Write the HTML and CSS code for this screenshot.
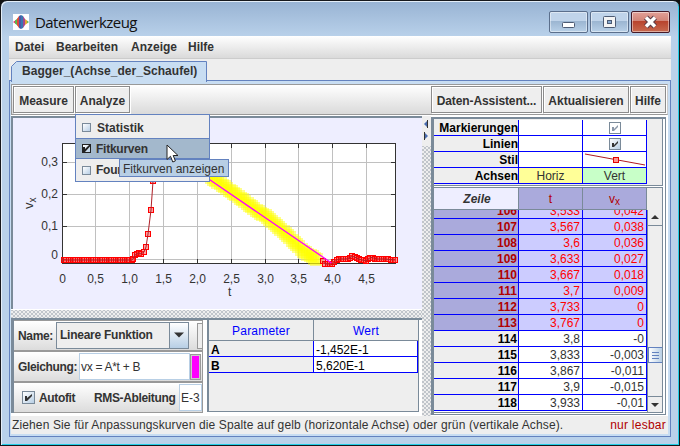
FILE: index.html
```
<!DOCTYPE html>
<html lang="de">
<head>
  <meta charset="UTF-8">
  <title>Datenwerkzeug</title>
  <link rel="stylesheet" href="styles.css">
</head>
<body>
  <div class="window">
    <div class="titlebar">
      <svg class="app-icon" width="16" height="16" viewBox="0 0 16 16">
        <rect width="16" height="16" fill="#fff"/>
        <path d="M0 8l3-2v4z" fill="#e8336d"/>
        <path d="M2 6.500l3-2.500v8L2 9.500z" fill="#5cb848"/>
        <path d="M4 5l2-3v12l-2-3z" fill="#e0483c"/>
        <path d="M6 2l2-1v14l-2-1z" fill="#4a58a8"/>
        <path d="M8 1l2 1v12l-2 1z" fill="#3a78b0"/>
        <path d="M10 2l2 3v6l-2 3z" fill="#a04890"/>
        <path d="M12 5l2 1.500v3L12 11z" fill="#e8a030"/>
        <path d="M14 6.500l2 1.500-2 1.500z" fill="#68c050"/>
      </svg>
      <span class="title">Datenwerkzeug</span>
      <div class="win-buttons">
        <div class="win-btn"><svg width="37" height="20"><rect x="12.500" y="10.500" width="12" height="5" rx="1" fill="#fff" stroke="#4d5b73"/></svg></div>
        <div class="win-btn"><svg width="37" height="20"><rect x="12.500" y="4.500" width="12" height="11" rx="1" fill="#f4f4f4" stroke="#4d5b73"/><rect x="16.500" y="8.500" width="4" height="3" fill="#86a8cf" stroke="#4d5b73"/></svg></div>
        <div class="win-btn close"><svg width="37" height="20"><path d="M14 5.500l9 9M23 5.500l-9 9" stroke="#5a3b45" stroke-width="5.500"/><path d="M14 5.500l9 9M23 5.500l-9 9" stroke="#fff" stroke-width="3.500"/></svg></div>
      </div>
    </div>

    <div class="client">
      <div class="menubar">
        <span class="m1">Datei</span><span class="m2">Bearbeiten</span><span class="m3">Anzeige</span><span>Hilfe</span>
      </div>
      <div class="tabs">
        <div class="tab">
          <svg width="196" height="22"><path d="M.5 22V6.500l5-5H195.500V22" fill="#c8ddf2" stroke="#6382bf"/></svg>
          <span>Bagger_(Achse_der_Schaufel)</span>
        </div>
      </div>

      <div class="panel">
        <div class="toolbar">
          <div class="tool measure">Measure</div>
          <div class="tool analyze">Analyze</div>
          <div class="space"></div>
          <div class="tool assistant">Daten-Assistent...</div>
          <div class="tool update">Aktualisieren</div>
          <div class="tool help">Hilfe</div>
        </div>

        <div class="main">
          <div class="left">
            <div class="plot">
              <svg id="chart" width="408" height="190" viewBox="13 118 408 190">
                <rect x="62.500" y="143.500" width="333" height="120" fill="#fff"/>
                <g id="grid"></g>
                <rect x="62.500" y="143.500" width="333" height="120" fill="none" stroke="#333"/>
                <g id="ticks" stroke="#333"></g>
                <g id="labels" class="labels"></g>
                <g id="points"></g>
                <text x="228" y="296" class="axis">t</text>
                <text transform="translate(33 209) rotate(-90)" class="axis axis-y">v<tspan dy="3" font-size="10">x</tspan></text>
              </svg>
            </div>
            <div class="hdivider"></div>
            <div class="bottom">
              <div class="controls">
                <div class="row">
                  <span class="lbl name">Name:</span>
                  <div class="combo"><span>Lineare Funktion</span><i><svg width="18" height="24"><path d="M4 9.500h10l-5 5z" fill="#333"/></svg></i></div>
                  <div class="stub"></div>
                </div>
                <div class="row">
                  <span class="lbl eq">Gleichung:</span>
                  <div class="field">vx = A*t + B</div>
                  <div class="swatch"></div>
                </div>
                <div class="row">
                  <span class="check auto"><svg width="13" height="13"><path d="M3 5h2v2l5-4v2L5 10H3z" fill="#333"/></svg></span>
                  <span class="lbl autofit">Autofit</span>
                  <span class="lbl rms">RMS-Ableitung</span>
                  <div class="field rmsval">E-3</div>
                </div>
              </div>
              <div class="params">
                <div class="phead"><span>Parameter</span><span>Wert</span></div>
                <div class="prow"><b>A</b><span>-1,452E-1</span></div>
                <div class="prow"><b>B</b><span>5,620E-1</span></div>
              </div>
            </div>
          </div>

          <div class="vdivider">
            <svg width="9" height="30"><path d="M6 4v8L2 8z" fill="#4a6cb0"/><path d="M2 16v8l4-4z" fill="#4a6cb0"/><path d="M2.500 16v8M5.500 4v8" stroke="#333"/></svg>
          </div>

          <div class="right">
            <div class="style-table">
              <div class="srow"><b>Markierungen</b><span></span><span><em class="check off"><svg width="12" height="12"><path d="M3 5h2v2l4-4v2L5 9H3z" fill="#8a97a8"/></svg></em></span></div>
              <div class="srow"><b>Linien</b><span></span><span><em class="check"><svg width="12" height="12"><path d="M3 5h2v2l4-4v2L5 9H3z" fill="#333"/></svg></em></span></div>
              <div class="srow"><b>Stil</b><span></span><span><svg width="63" height="15"><path d="M2 2l60 11" stroke="#b01820"/><rect x="30.500" y="5.500" width="5" height="5" fill="#ff9090" stroke="#e00000"/></svg></span></div>
              <div class="srow"><b>Achsen</b><span class="horiz">Horiz</span><span class="vert">Vert</span></div>
            </div>
            <div class="data-table">
              <div class="dhead"><b>Zeile</b><span>t</span><span>v<sub>x</sub></span><i></i></div>
              <div class="dbody">
                <div class="rows">
                  <div class="drow sel"><b>106</b><span>3,533</span><span>0,042</span></div>
                  <div class="drow sel"><b>107</b><span>3,567</span><span>0,038</span></div>
                  <div class="drow sel"><b>108</b><span>3,6</span><span>0,036</span></div>
                  <div class="drow sel"><b>109</b><span>3,633</span><span>0,027</span></div>
                  <div class="drow sel"><b>110</b><span>3,667</span><span>0,018</span></div>
                  <div class="drow sel"><b>111</b><span>3,7</span><span>0,009</span></div>
                  <div class="drow sel"><b>112</b><span>3,733</span><span>0</span></div>
                  <div class="drow sel"><b>113</b><span>3,767</span><span>0</span></div>
                  <div class="drow"><b>114</b><span>3,8</span><span>-0</span></div>
                  <div class="drow"><b>115</b><span>3,833</span><span>-0,003</span></div>
                  <div class="drow"><b>116</b><span>3,867</span><span>-0,011</span></div>
                  <div class="drow"><b>117</b><span>3,9</span><span>-0,015</span></div>
                  <div class="drow"><b>118</b><span>3,933</span><span>-0,01</span></div>
                </div>
                <div class="scrollbar">
                  <div class="arrow"><svg width="14" height="15"><path d="M3 9h8L7 5z" fill="#333"/></svg></div>
                  <div class="track"></div>
                  <div class="thumb"><i></i><i></i><i></i></div>
                  <div class="track2"></div>
                  <div class="arrow down"><svg width="14" height="15"><path d="M3 6h8l-4 4z" fill="#333"/></svg></div>
                </div>
              </div>
            </div>
          </div>
        </div>

        <div class="status">
          <span class="hint">Ziehen Sie für Anpassungskurven die Spalte auf gelb (horizontale Achse) oder grün (vertikale Achse).</span>
          <span class="readonly">nur lesbar</span>
        </div>
      </div>
    </div>
  </div>

  <div class="popup">
    <div class="item first"><em class="box"></em>Statistik</div>
    <div class="item active"><em class="box on"><svg width="9" height="9"><path d="M1 3h2v2l5-5v2.500L3 8H1z" fill="#222"/></svg></em>Fitkurven</div>
    <div class="item"><em class="box"></em>Four</div>
  </div>
  <div class="tooltip">Fitkurven anzeigen</div>
  <svg class="cursor" width="14" height="20" viewBox="0 0 14 20"><path d="M1 1v14.500l3.500-3.200 2.300 5.700 2.600-1.100L7.200 11.500H12z" fill="#fff" stroke="#222"/></svg>

  <script>
    const NS = 'http://www.w3.org/2000/svg';
    function add(parent, tag, attrs, text) {
      const el = document.createElementNS(NS, tag);
      for (const k in attrs) el.setAttribute(k, attrs[k]);
      if (text) el.textContent = text;
      document.getElementById(parent).appendChild(el);
    }

    // grid, ticks and axis labels
    const xs = [62, 95, 129, 163, 197, 231, 265, 298, 332, 366];
    const xl = ['0', '0,5', '1,0', '1,5', '2,0', '2,5', '3,0', '3,5', '4,0', '4,5'];
    xs.forEach((x, i) => {
      if (i) {
        add('grid', 'path', { d: `M${x + .5} 144V263`, stroke: '#c0c0c0' });
        add('ticks', 'path', { d: `M${x + .5} 144v4M${x + .5} 263v-4` });
      }
      add('labels', 'text', { x: x + .5, y: 283, 'text-anchor': 'middle' }, xl[i]);
    });
    [[162, '0,3'], [194, '0,2'], [226, '0,1'], [259, '0']].forEach(([y, t], i) => {
      add('grid', 'path', { d: `M63 ${y + .5}H395`, stroke: '#c0c0c0' });
      add('ticks', 'path', { d: `M63 ${y + .5}h4M395 ${y + .5}h-4` });
      add('labels', 'text', { x: 58, y: i === 3 ? 259 : y + 4, 'text-anchor': 'end' }, t);
    });

    function interpolate(pts, x) {
      for (let i = 1; i < pts.length; i++) {
        const [x0, y0] = pts[i - 1], [x1, y1] = pts[i];
        if (x <= x1) return y0 + (y1 - y0) * (x - x0) / (x1 - x0);
      }
      return pts[pts.length - 1][1];
    }
    function marks(pts) {
      pts.forEach(([x, y]) => add('points', 'rect', {
        x: Math.round(x) - 2.5, y: Math.round(y) - 2.5, width: 5, height: 5,
        fill: '#ff4040', 'fill-opacity': .5, stroke: '#f00'
      }));
      add('points', 'polyline', { points: pts.map(p => p.join()).join(' '), fill: 'none', stroke: '#b02028' });
    }

    const start = [];
    for (let x = 64; x < 132; x += 2.25) start.push([x, 260]);
    start.push([133, 259], [135, 255], [137, 254], [139, 253], [141, 254], [144, 252], [146, 247], [148, 234], [151, 210], [153, 181], [155, 160]);
    marks(start);

    // highlighted points
    const band = [[196, 166], [210, 177], [226, 188], [240, 198], [254, 209], [268, 218], [280, 229], [292, 240], [304, 252], [317, 260]];
    for (let x = 198; x < 318; x += 2.25) {
      add('points', 'rect', { x: Math.round(x) - 7, y: Math.round(interpolate(band, x)) - 7, width: 13, height: 13, fill: '#ff0', 'fill-opacity': .45 });
    }

    const tail = [[323, 261], [325, 264], [328, 264], [333, 264], [336, 260], [341, 259], [347, 259], [353, 256], [358, 259], [366, 261], [371, 257], [376, 259], [384, 259], [395, 260]];
    const end = [];
    for (let x = 323; x <= 395; x += 2.25) end.push([x, interpolate(tail, x)]);
    marks(end);
    add('points', 'path', { d: 'M205 176.500L331.500 263', stroke: '#f0f', 'stroke-width': 1.3 });
  </script>
</body>
</html>
```
FILE: styles.css
```
* {
  box-sizing: border-box;
}
body {
  margin: 0;
  width: 680px;
  height: 446px;
  overflow: hidden;
  background: #111;
  font: 12px "Liberation Sans", Arial, sans-serif;
  color: #333;
}
b, em, i {
  font-style: normal;
}
svg {
  display: block;
}
.window {
  width: 680px;
  height: 446px;
  border: 1px solid #16181c;
  border-radius: 7px 7px 0 0;
  background: linear-gradient(#98b3d3, #b9d1ea 36px);
  box-shadow: inset 1px 1px #e4eef8, inset -1px -1px #22cfe8;
}
.titlebar {
  display: flex;
  height: 35px;
  padding-left: 12px;
}
.app-icon {
  margin-top: 13px;
}
.title {
  margin: 9px 0 0 6px;
  font: 15px/24px "Open Sans", sans-serif;
  letter-spacing: -0.55px;
  color: #111;
}
.win-buttons {
  display: flex;
  gap: 2px;
  margin: 10px 9px 0 auto;
}
.win-btn {
  width: 39px;
  height: 22px;
  border: 1px solid #5b6f8c;
  border-radius: 2px;
  background: linear-gradient(#c0d4ea 45%, #9bb5d1 46%, #b8d0e8);
  box-shadow: inset 0 0 0 1px rgba(255, 255, 255, 0.45);
}
.win-btn.close {
  border-color: #451a28;
  background: linear-gradient(#e2a097, #d28477 45%, #b8432d 46%, #c86a50);
}
.client {
  width: 662px;
  margin-left: 8px;
  background: #eee;
}
.menubar {
  display: flex;
  height: 23px;
  padding-left: 6px;
  border-bottom: 1px solid #ccc;
  background: linear-gradient(#fff, #dadada);
  font-weight: bold;
  line-height: 22px;
}
.m1 {
  width: 41px;
}
.m2 {
  width: 75px;
}
.m3 {
  width: 57px;
}
.tabs {
  height: 21px;
  padding: 1px 0 0 2px;
}
.tab {
  display: grid;
  position: relative;
  z-index: 1;
  width: 196px;
}
.tab > * {
  grid-area: 1 / 1;
}
.tab span {
  padding-left: 11px;
  font-weight: bold;
  line-height: 22px;
  letter-spacing: 0.05px;
}
.panel {
  height: 357px;
  padding: 3px 2px 2px 1px;
  border: 1px solid #6382bf;
  background: #c8ddf2;
}
.toolbar {
  display: flex;
  gap: 1px;
  height: 31px;
  padding: 1px 1px 0;
  border: 1px solid #999;
  border-right-color: #ccc;
  background: linear-gradient(#fff, #dadada);
}
.tool {
  height: 27px;
  border: 1px solid #8c8c8c;
  box-shadow: inset 1px 1px #fff, 1px 1px #fff;
  background: #eee;
  font-weight: bold;
  line-height: 28px;
  text-align: center;
  white-space: nowrap;
}
.measure {
  width: 61px;
}
.analyze {
  width: 55px;
}
.space {
  flex: 1;
}
.assistant {
  width: 111px;
  letter-spacing: -0.1px;
}
.update {
  width: 86px;
}
.help {
  width: 36px;
}
.main {
  display: flex;
  height: 301px;
  padding-top: 1px;
  background: #fff;
}
.left {
  width: 411px;
}
.plot {
  height: 193px;
  border: solid #7a8a99;
  border-width: 2px 0 0 2px;
  background: #eef;
}
.labels, .axis {
  fill: #333;
  font: 12px "Liberation Sans", Arial, sans-serif;
}
.axis-y {
  font-size: 13px;
}
.hdivider {
  height: 9px;
  border-top: 1px solid #fff;
  background:
    radial-gradient(circle, #8a94a0 0.6px, transparent 0.8px) 3px 2px / 4px 4px,
    radial-gradient(circle, #8a94a0 0.6px, transparent 0.8px) 1px 0 / 4px 4px,
    #eee;
}
.bottom {
  display: flex;
  gap: 4px;
  height: 96px;
  border-top: 2px solid #7a8a99;
}
.controls {
  width: 192px;
  height: 93px;
  border-left: 3px solid #7a8a99;
  background: #eee;
}
.row {
  display: flex;
  align-items: center;
  height: 31px;
  border: solid #999;
  border-width: 1px 1px 1px 0;
  box-shadow: inset 0 1px #fff;
  background: linear-gradient(#fff, #dcdcdc);
}
.lbl {
  padding-top: 1px;
  font-weight: bold;
  letter-spacing: -0.35px;
  white-space: nowrap;
}
.name {
  width: 42px;
  padding-left: 4px;
}
.combo {
  display: flex;
  width: 133px;
  height: 27px;
  border: 1px solid #7a8a99;
  background: #eee;
  font-weight: bold;
  line-height: 25px;
}
.combo span {
  width: 112px;
  padding-left: 3px;
  letter-spacing: -0.25px;
}
.combo i {
  width: 19px;
  border-left: 1px solid #7a8a99;
  background: linear-gradient(#fff, #b8cfe5);
}
.stub {
  width: 5px;
  height: 26px;
  margin-left: auto;
  border: solid #999;
  border-width: 1px 0 1px 1px;
  background: #eee;
}
.eq {
  width: 65px;
  padding-left: 4px;
}
.field {
  width: 111px;
  height: 27px;
  padding-left: 1px;
  border: 1px solid #b8cfe5;
  background: #fff;
  line-height: 26px;
  letter-spacing: -0.3px;
  white-space: nowrap;
}
.swatch {
  width: 11px;
  height: 26px;
  border: 2px solid #ccc;
  outline: 1px solid #999;
  outline-offset: -1px;
  background: #f0f;
}
.check {
  display: block;
  width: 12px;
  height: 12px;
  border: 1px solid #7a8a99;
  background: linear-gradient(135deg, #fff, #b8cfe5);
}
.check svg {
  margin: -1px;
}
.check.off {
  background: #fff;
}
.auto {
  width: 13px;
  height: 13px;
  margin-left: 8px;
}
.autofit {
  width: 55px;
  margin-left: 4px;
}
.rms {
  width: 85px;
}
.rmsval {
  width: 23px;
  padding-left: 1px;
  letter-spacing: 0;
}
.params {
  width: 212px;
  height: 92px;
  border: solid #7a8a99;
  border-width: 0 1px 1px 2px;
  background: #eee;
}
.phead {
  display: flex;
  height: 21px;
  border-bottom: 1px solid #7a8a99;
  color: #00f;
  line-height: 22px;
  letter-spacing: 0.2px;
  text-align: center;
}
.phead span {
  width: 104px;
}
.phead span:first-child {
  width: 105px;
  border-right: 1px solid #7a8a99;
}
.prow {
  display: flex;
  height: 16px;
  color: #000;
  line-height: 18px;
}
.prow b {
  width: 105px;
  padding-left: 2px;
  border: solid #00f;
  border-width: 0 1px 1px 0;
}
.prow span {
  width: 104px;
  padding-left: 2px;
  border: solid #00f;
  border-width: 0 1px 1px 0;
  background: #fff;
}
.vdivider {
  width: 9px;
  background:
    radial-gradient(circle, #8a94a0 0.6px, transparent 0.8px) 3px 0 / 4px 4px,
    radial-gradient(circle, #8a94a0 0.6px, transparent 0.8px) 1px 2px / 4px 4px,
    #eee;
}
.vdivider svg {
  background: #eee;
}
.right {
  width: 235px;
  height: 298px;
  margin-top: 1px;
  padding-right: 2px;
  border: 1px solid #7a8a99;
  border-width: 2px 1px 1px 3px;
}
.style-table {
  height: 67px;
  padding-top: 1px;
  border: solid #7a8a99;
  border-width: 0 1px 1px 0;
  background: #eee;
}
.srow, .drow {
  display: flex;
  height: 16px;
  line-height: 16px;
}
.srow b {
  width: 85px;
  border: solid #00f;
  border-width: 0 1px 1px 0;
  color: #000;
  text-align: right;
}
.srow span {
  display: flex;
  justify-content: center;
  width: 64px;
  border: solid #00f;
  border-width: 0 1px 1px 0;
  background: #fff;
}
.srow .check {
  margin: 2px 0 0 1px;
}
.srow .horiz {
  background: #ffff98;
}
.srow .vert {
  background: #c8ffc8;
}
.data-table {
  height: 226px;
  margin-top: 1px;
  border: solid #7a8a99;
  border-width: 1px 1px 1px 0;
}
.dhead {
  display: flex;
  height: 22px;
  color: #b00000;
  line-height: 23px;
  text-align: center;
}
.dhead > * {
  width: 64px;
  border: solid #7a8a99;
  border-width: 0 1px 1px 0;
  background: #aaaadc;
}
.dhead b {
  width: 85px;
  padding-left: 2px;
  background: #eef;
  color: #333;
  font-style: italic;
}
.dhead i {
  flex: 1;
  border: 0;
  background: #eee;
}
.dhead sub {
  font-size: 10px;
  line-height: 0;
  vertical-align: -2px;
}
.dbody {
  display: flex;
  height: 202px;
  overflow: hidden;
}
.rows {
  width: 213px;
  margin-top: -7px;
}
.drow b {
  width: 85px;
  padding-right: 1px;
  border: solid #00f;
  border-width: 0 1px 1px 0;
  background: #eee;
  color: #000;
  text-align: right;
}
.drow span {
  width: 64px;
  padding-right: 2px;
  border: solid #00f;
  border-width: 0 1px 1px 0;
  background: #fff;
  text-align: right;
}
.drow.sel b {
  background: #aaaadc;
  color: #b00000;
}
.drow.sel span {
  background: #ccf;
  color: #f00;
}
.scrollbar {
  display: flex;
  flex-direction: column;
  width: 15px;
  height: 202px;
  border-left: 1px solid #7a8a99;
  background: #eee;
}
.arrow {
  height: 16px;
  border-bottom: 1px solid #7a8a99;
}
.track {
  height: 121px;
}
.thumb {
  height: 16px;
  padding: 4px 3px 0;
  border: 1px solid #6382bf;
  border-right: 0;
  background: linear-gradient(90deg, #fff, #b8cfe5);
}
.thumb i {
  display: block;
  height: 1px;
  margin-bottom: 2px;
  background: #6382bf;
}
.track2 {
  flex: 1;
}
.arrow.down {
  border-top: 1px solid #7a8a99;
  border-bottom: 0;
}
.status {
  display: flex;
  justify-content: space-between;
  height: 18px;
  padding: 0 2px 0 1px;
  background: #eee;
  line-height: 19px;
  white-space: nowrap;
}
.hint {
  letter-spacing: 0.13px;
}
.readonly {
  color: #b00000;
  letter-spacing: 0.25px;
}
.popup {
  position: absolute;
  left: 75px;
  top: 114px;
  width: 135px;
  height: 68px;
  border: 1px solid #6382bf;
  background: #eee;
  font-weight: bold;
  letter-spacing: -0.25px;
}
.item {
  display: flex;
  align-items: center;
  height: 22px;
  padding-left: 6px;
}
.item.first {
  height: 23px;
  padding-top: 2px;
  letter-spacing: 0;
}
.item.first .box {
  margin-right: 6px;
}
.item.active {
  height: 21px;
  border: solid #6382bf;
  border-width: 1px 0;
  background: #a3b8cc;
}
.box {
  width: 9px;
  height: 9px;
  margin-right: 5px;
  border: 1px solid #7a8a99;
  background: linear-gradient(135deg, #fff, #b8cfe5);
}
.box svg {
  margin: -1px;
}
.box.on {
  border-color: #222;
}
.tooltip {
  position: absolute;
  left: 119px;
  top: 159px;
  width: 110px;
  height: 18px;
  padding-left: 3px;
  border: 1px solid #6382bf;
  background: #b8cfe5;
  line-height: 18px;
  white-space: nowrap;
}
.cursor {
  position: absolute;
  left: 166px;
  top: 144px;
}
```
